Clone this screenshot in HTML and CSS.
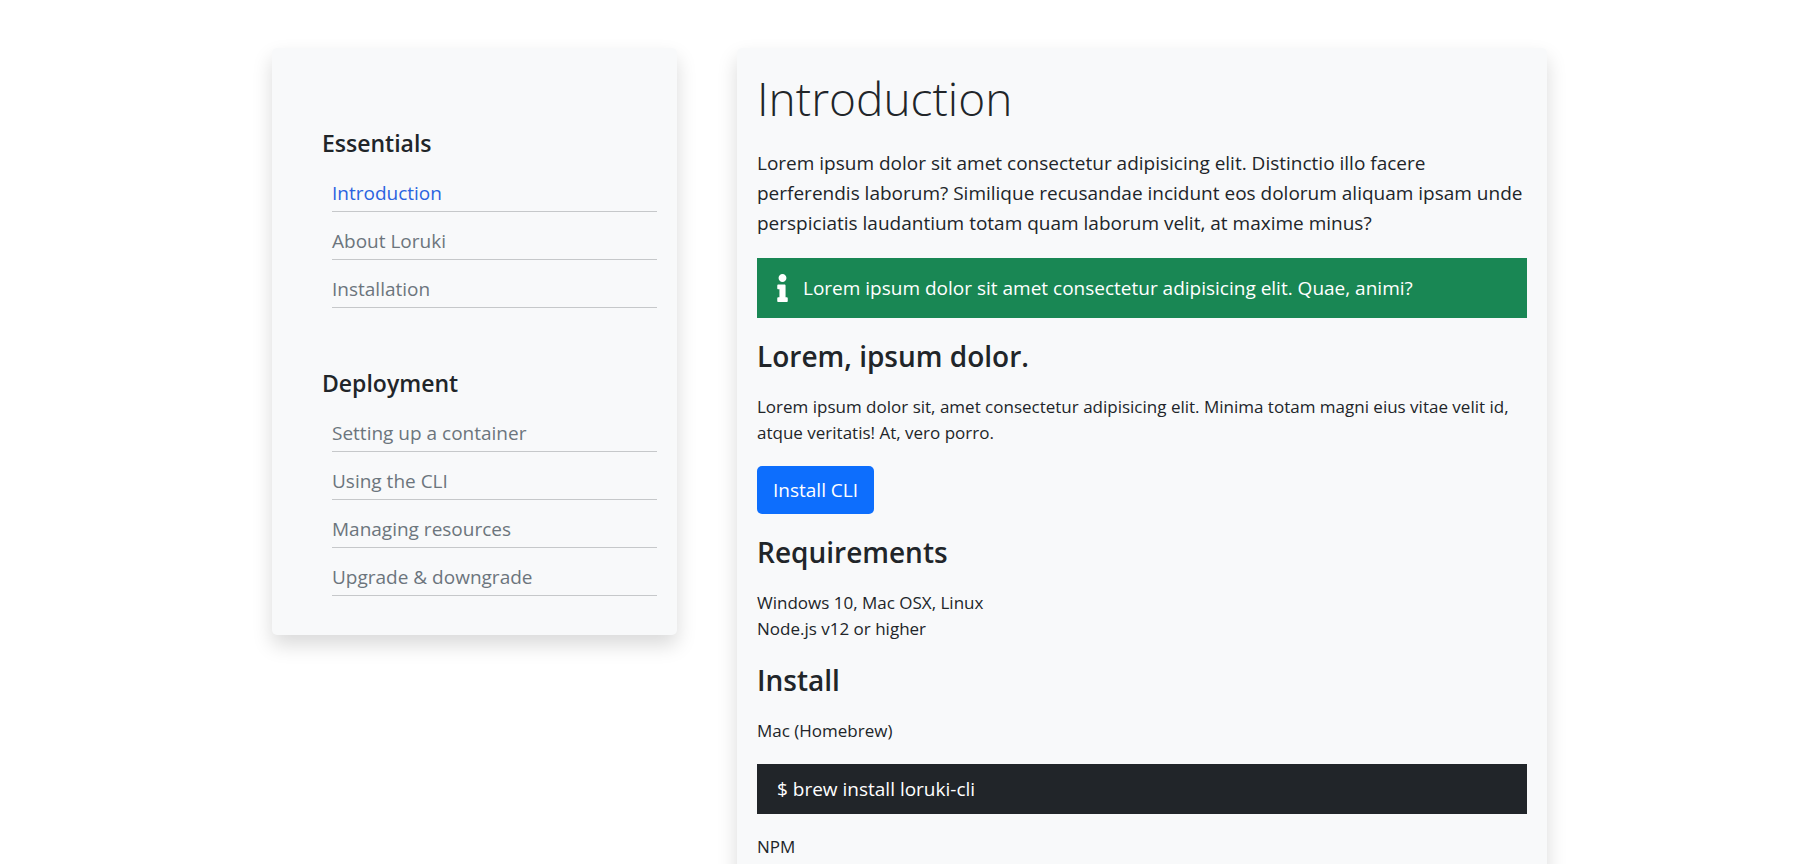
FILE: index.html
```html
<!DOCTYPE html>
<html lang="en">
<head>
  <meta charset="utf-8">
  <meta name="viewport" content="width=device-width, initial-scale=1">
  <title>Loruki Docs</title>
  <link rel="stylesheet" href="styles.css">
</head>
<body>
  <div class="docs">
    <nav class="card sidebar" aria-label="Documentation">
      <section class="group">
        <h3 class="group-title">Essentials</h3>
        <ul class="links">
          <li class="item"><a class="link active" href="#introduction">Introduction</a></li>
          <li class="item"><a class="link" href="#about">About Loruki</a></li>
          <li class="item"><a class="link" href="#installation">Installation</a></li>
        </ul>
      </section>
      <section class="group">
        <h3 class="group-title">Deployment</h3>
        <ul class="links">
          <li class="item"><a class="link" href="#container">Setting up a container</a></li>
          <li class="item"><a class="link" href="#cli">Using the CLI</a></li>
          <li class="item"><a class="link" href="#resources">Managing resources</a></li>
          <li class="item"><a class="link" href="#upgrade">Upgrade &amp; downgrade</a></li>
        </ul>
      </section>
    </nav>
    <main class="card content">
      <h1 class="title" id="introduction">Introduction</h1>
      <p class="lead">Lorem ipsum dolor sit amet consectetur adipisicing elit. Distinctio illo facere perferendis laborum? Similique recusandae incidunt eos dolorum aliquam ipsam unde perspiciatis laudantium totam quam laborum velit, at maxime minus?</p>
      <div class="alert">
        <svg class="alert-icon" viewBox="0 0 192 512" aria-hidden="true"><path fill="currentColor" d="M20 424.229h20V279.771H20c-11.046 0-20-8.954-20-20V212c0-11.046 8.954-20 20-20h112c11.046 0 20 8.954 20 20v212.229h20c11.046 0 20 8.954 20 20V492c0 11.046-8.954 20-20 20H20c-11.046 0-20-8.954-20-20v-47.771c0-11.046 8.954-20 20-20zM96 0C56.235 0 24 32.235 24 72s32.235 72 72 72 72-32.235 72-72S135.764 0 96 0z"/></svg>
        <span>Lorem ipsum dolor sit amet consectetur adipisicing elit. Quae, animi?</span>
      </div>
      <h2 class="heading">Lorem, ipsum dolor.</h2>
      <p class="text">Lorem ipsum dolor sit, amet consectetur adipisicing elit. Minima totam magni eius vitae velit id, atque veritatis! At, vero porro.</p>
      <a class="button" href="#install">Install CLI</a>
      <h2 class="heading">Requirements</h2>
      <ul class="text requirements">
        <li>Windows 10, Mac OSX, Linux</li>
        <li>Node.js v12 or higher</li>
      </ul>
      <h2 class="heading" id="install">Install</h2>
      <p class="text">Mac (Homebrew)</p>
      <div class="command">$ brew install loruki-cli</div>
      <p class="text">NPM</p>
    </main>
  </div>
</body>
</html>
```

FILE: styles.css
```css
* {
  box-sizing: border-box;
  margin: 0;
  padding: 0;
}

body {
  background: #fff;
  color: #212529;
  font-family: "Segoe UI", "Open Sans", "Noto Sans", sans-serif;
  font-size: 19px;
  line-height: 30px;
}

ul {
  list-style: none;
}

.docs {
  display: grid;
  grid-template-columns: 1fr 2fr;
  gap: 60px;
  align-items: start;
  max-width: 1275px;
  margin: 48px auto;
}

.card {
  background: #f8f9fa;
  border-radius: 5px;
  box-shadow: 0 10px 20px rgba(0, 0, 0, 0.15);
  padding: 20px;
}

.sidebar {
  display: grid;
  gap: 60px;
  padding: 80px 20px 39px 50px;
}

.group {
  display: grid;
  gap: 20px;
}

.group-title {
  font-size: 23px;
  font-weight: 600;
  line-height: 30px;
}

.links {
  display: grid;
  gap: 14px;
  padding-left: 10px;
}

.item {
  border-bottom: 1px solid #c6c8ca;
  padding-bottom: 3px;
}

.link {
  color: #6c757d;
  text-decoration: none;
}

.link.active {
  color: #2b63e0;
}

.content {
  display: grid;
  gap: 20px;
}

.title {
  font-size: 46px;
  font-weight: 300;
  line-height: 60px;
}

.alert {
  display: flex;
  align-items: center;
  gap: 15px;
  padding: 15px 20px;
  background: #198754;
  color: #fff;
}

.alert-icon {
  flex: none;
  width: 11px;
  height: 28px;
}

.heading {
  font-size: 28px;
  font-weight: 600;
  line-height: 36px;
}

.text {
  font-size: 17px;
  line-height: 26px;
}

.button {
  justify-self: start;
  padding: 9px 16px;
  border-radius: 5px;
  background: #0d6efd;
  color: #fff;
  text-decoration: none;
}

.command {
  padding: 10px 20px;
  background: #212529;
  color: #fff;
}
```
